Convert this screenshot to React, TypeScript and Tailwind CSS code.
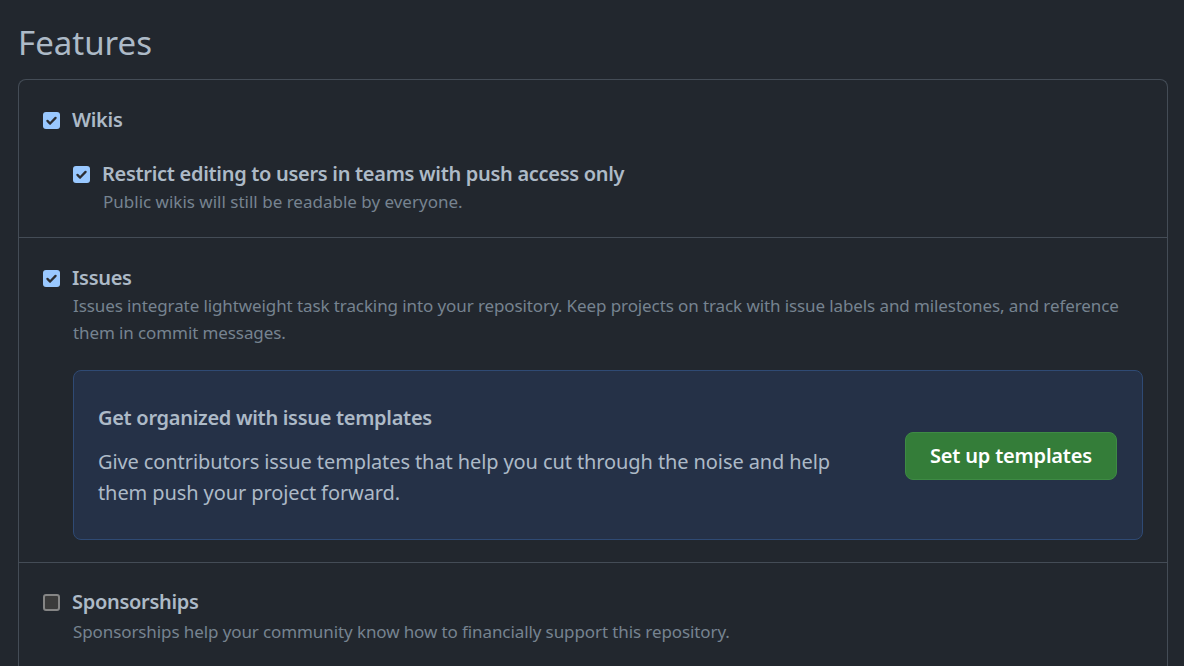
import React from "react";

const font = { fontFamily: '"Noto Sans", "Open Sans", sans-serif' };

function Check({ checked }: { checked: boolean }) {
  if (checked) {
    return (
      <span className="mt-[1px] flex h-[17px] w-[17px] shrink-0 items-center justify-center rounded-[3px] bg-[#99c8ff]">
        <svg width="13" height="13" viewBox="0 0 16 16">
          <path d="M3 8.5 L6.3 11.8 L13 4.8" fill="none" stroke="#2b2d31" strokeWidth="2.8" strokeLinecap="round" strokeLinejoin="round" />
        </svg>
      </span>
    );
  }
  return <span className="mt-[1px] h-[17px] w-[17px] shrink-0 rounded-[3px] border-2 border-[#858585] bg-[#3b3b3b]" />;
}

export default function App() {
  return (
    <div className="h-[666px] w-[1184px] overflow-hidden bg-[#22272e] text-[#adbac7]" style={font}>
      <div className="pl-[18px] pr-[16px] pt-[21px]">
        <h2 className="text-[33px] font-normal leading-[44px] text-[#adbac7]">Features</h2>
        <div className="mt-[14px] rounded-t-[8px] border border-b-0 border-[#444c56]">
          {/* Wikis */}
          <div className="border-b border-[#444c56] pl-[24px] pr-[24px] pt-[26px] pb-[21px]">
            <div className="flex items-center gap-[12px]">
              <Check checked />
              <span className="text-[20px] font-semibold leading-[28px] tracking-[-0.3px]">Wikis</span>
            </div>
            <div className="mt-[26px] flex items-center gap-[12px] pl-[30px]">
              <Check checked />
              <span className="text-[20px] font-semibold leading-[28px] tracking-[-0.3px]">Restrict editing to users in teams with push access only</span>
            </div>
            <div className="pl-[60px] text-[17px] leading-[28px] text-[#768390]">Public wikis will still be readable by everyone.</div>
          </div>
          {/* Issues */}
          <div className="border-b border-[#444c56] pl-[24px] pr-[24px] pt-[26px] pb-[22px]">
            <div className="flex items-center gap-[12px]">
              <Check checked />
              <span className="text-[20px] font-semibold leading-[28px] tracking-[-0.3px]">Issues</span>
            </div>
            <div className="pl-[30px] pr-[16px] text-[17px] leading-[27px] tracking-[-0.1px] text-[#768390]">
              Issues integrate lightweight task tracking into your repository. Keep projects on track with issue labels and milestones, and reference them in commit messages.
            </div>
            <div className="ml-[30px] mt-[24px] flex items-center justify-between rounded-[8px] border border-[#2f4a74] bg-[#253147] pl-[24px] pr-[25px] pt-[33px] pb-[31px]">
              <div>
                <div className="text-[20px] font-semibold leading-[28px] tracking-[-0.3px]">Get organized with issue templates</div>
                <div className="mt-[14px] max-w-[740px] text-[20px] leading-[31px] tracking-[-0.1px]">
                  Give contributors issue templates that help you cut through the noise and help them push your project forward.
                </div>
              </div>
              <button className="h-[48px] w-[212px] rounded-[8px] border border-[#3e8a44] bg-[#347d39] text-[20px] font-semibold tracking-[-0.2px] text-white">
                Set up templates
              </button>
            </div>
          </div>
          {/* Sponsorships */}
          <div className="pl-[24px] pr-[24px] pt-[25px] pb-[22px]">
            <div className="flex items-center gap-[12px]">
              <Check checked={false} />
              <span className="text-[20px] font-semibold leading-[28px] tracking-[-0.3px]">Sponsorships</span>
            </div>
            <div className="pl-[30px] text-[17px] leading-[32px] tracking-[-0.1px] text-[#768390]">
              Sponsorships help your community know how to financially support this repository.
            </div>
          </div>
        </div>
      </div>
    </div>
  );
}
